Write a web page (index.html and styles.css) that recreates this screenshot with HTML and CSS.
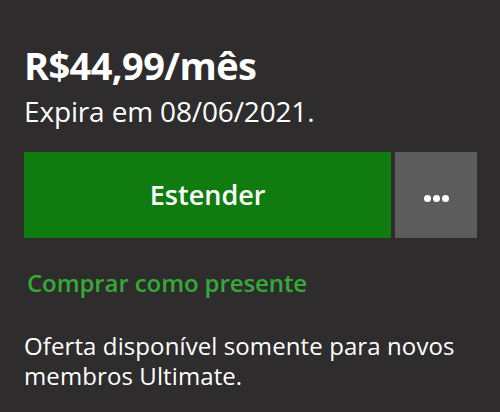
FILE: index.html
```html
<!DOCTYPE html>
<html lang="pt-BR">
<head>
<meta charset="utf-8">
<title>Xbox Game Pass Ultimate</title>
<link rel="stylesheet" href="styles.css">
</head>
<body>
<main class="panel">
  <div class="price">R$44,99/mês</div>
  <div class="expires">Expira em 08/06/2021.</div>
  <div class="actions">
    <button class="btn-primary">Estender</button>
    <button class="btn-more" aria-label="Mais opções"><span class="dot"></span><span class="dot"></span><span class="dot"></span></button>
  </div>
  <a class="gift" href="#">Comprar como presente</a>
  <p class="note">Oferta disponível somente para novos membros Ultimate.</p>
</main>
</body>
</html>
```
FILE: styles.css
```css
html, body {
  margin: 0;
  padding: 0;
  background: #2e2c2d;
  width: 500px;
  height: 412px;
  overflow: hidden;
}
.panel {
  padding: 42px 23px 0 24px;
  font-family: "Open Sans", "Noto Sans", sans-serif;
  color: #ffffff;
}
.price {
  font-size: 38px;
  font-weight: 700;
  line-height: 46px;
  letter-spacing: -0.6px;
}
.expires {
  font-size: 28px;
  line-height: 30px;
  margin-top: 8px;
  letter-spacing: -0.15px;
}
.actions {
  display: flex;
  gap: 4px;
  margin-top: 26px;
  height: 86px;
}
.btn-primary {
  width: 368px;
  border: 0;
  background: #107c10;
  color: #fff;
  font-family: inherit;
  font-size: 27px;
  font-weight: 600;
  padding: 0 0 2px;
}
.btn-more {
  width: 82px;
  border: 0;
  background: #5d5c5d;
  display: flex;
  align-items: center;
  justify-content: center;
  gap: 2px;
  padding: 6px 0 0;
}
.dot {
  width: 7px;
  height: 7px;
  border-radius: 50%;
  background: #fff;
}
.gift {
  display: block;
  margin-top: 31px;
  margin-left: 3px;
  color: #35aa35;
  font-size: 24px;
  font-weight: 600;
  line-height: 28px;
  text-decoration: none;
  letter-spacing: -0.1px;
}
.note {
  margin: 34px 0 0;
  font-size: 24px;
  line-height: 30px;
  letter-spacing: 0.1px;
}
```
